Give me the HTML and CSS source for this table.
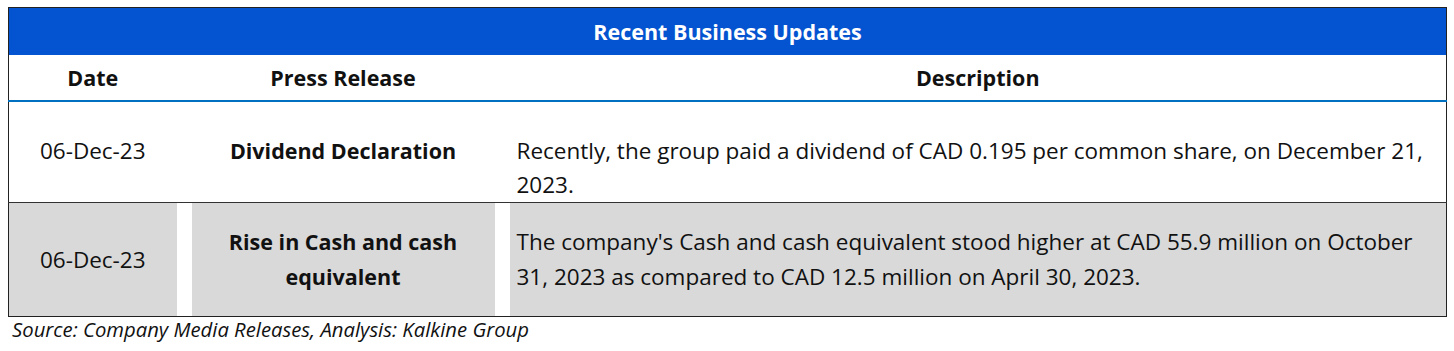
FILE: index.html
```html
<!DOCTYPE html>
<html lang="en">

<head>
  <meta charset="UTF-8">
  <meta name="viewport" content="width=device-width, initial-scale=1.0">
  <title>Recent Business Updates</title>
  <link rel="stylesheet" href="styles.css">
</head>

<body>
  <table class="updates">
    <colgroup>
      <col class="col-date">
      <col class="col-press">
      <col>
    </colgroup>
    <tr class="title-row">
      <th class="title" colspan="3">Recent Business Updates</th>
    </tr>
    <tr class="heads">
      <th>Date</th>
      <th>Press Release</th>
      <th>Description</th>
    </tr>
    <tr class="row-one">
      <td class="date">06-Dec-23</td>
      <td class="press">Dividend Declaration</td>
      <td class="desc">Recently, the group paid a dividend of CAD 0.195 per common share, on December 21, 2023.</td>
    </tr>
    <tr class="row-two">
      <td class="date">06-Dec-23</td>
      <td class="press">Rise in Cash and cash equivalent</td>
      <td class="desc">The company's Cash and cash equivalent stood higher at CAD 55.9 million on October 31, 2023 as compared to CAD 12.5 million on April 30, 2023.</td>
    </tr>
  </table>
  <p class="source">Source: Company Media Releases, Analysis: Kalkine Group</p>
</body>

</html>
```

FILE: styles.css
```css
body {
  margin: 0;
  padding: 7px 8px 0 8px;
  font-family: "Open Sans", Lato, sans-serif;
  color: #111;
  background: #fff;
}

.updates {
  width: 1439px;
  table-layout: fixed;
  border-collapse: collapse;
  border: 1px solid #222;
  font-size: 22.5px;
}

.col-date {
  width: 168px;
}

.col-press {
  width: 333px;
}

.updates th,
.updates td {
  padding: 0;
}

.title-row {
  height: 47px;
}

.title {
  background-color: #0453d0;
  color: #fff;
  font-size: 21.5px;
  font-weight: bold;
}

.heads {
  height: 46px;
}

.heads th {
  font-size: 21.5px;
  font-weight: bold;
  border-bottom: 2px solid #0070c0;
}

.date {
  text-align: center;
}

.press {
  text-align: center;
  font-size: 21.5px;
  font-weight: bold;
  line-height: 35px;
}

.updates .desc {
  line-height: 35px;
  padding-left: 7px;
  padding-right: 4px;
}

.row-one {
  height: 99px;
}

.updates .row-one td {
  vertical-align: top;
  padding-top: 32px;
  line-height: 34px;
  border-bottom: 1px solid #333;
}

.row-two {
  height: 114px;
}

.row-two td {
  background-color: #d9d9d9;
  vertical-align: middle;
}

.updates .row-two .press {
  box-shadow: inset 15px 0 #fff, inset -15px 0 #fff;
  padding: 0 22px;
}

.source {
  margin: -2px 0 0 4px;
  font-size: 20.3px;
  font-style: italic;
}
```
